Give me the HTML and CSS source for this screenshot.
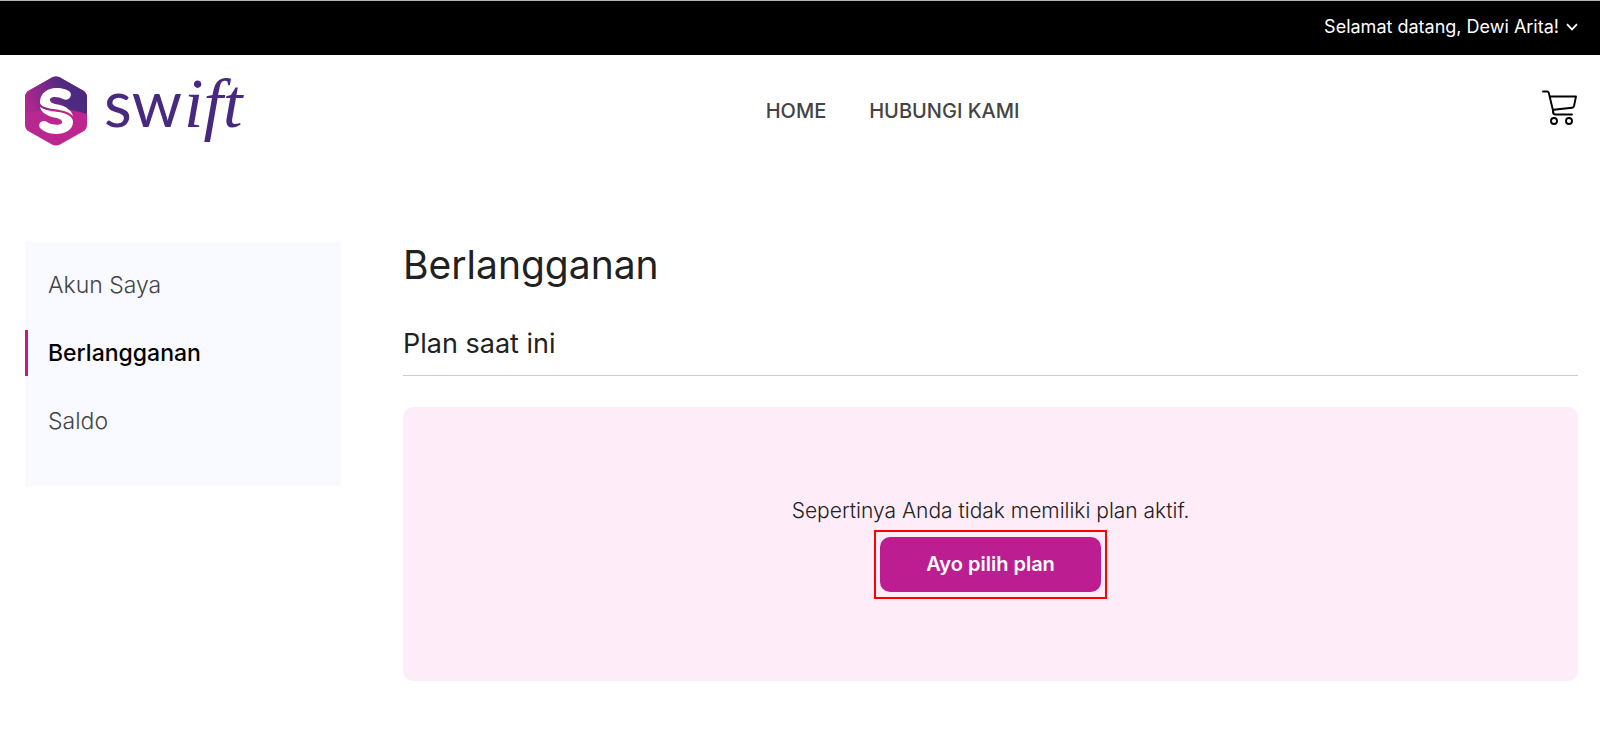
FILE: index.html
```html
<!DOCTYPE html>
<html lang="id">
<head>
<meta charset="utf-8">
<meta name="viewport" content="width=device-width, initial-scale=1">
<title>Berlangganan</title>
<link rel="stylesheet" href="styles.css">
</head>
<body>
<div class="topbar">
  <button class="account" type="button">
    <span>Selamat datang, Dewi Arita!</span>
    <svg class="chevron" viewBox="0 0 12 8" aria-hidden="true"><path d="M1 1.2 6 6.4 11 1.2" fill="none" stroke="currentColor" stroke-width="1.7"/></svg>
  </button>
</div>
<header class="header">
  <a class="brand" href="#" aria-label="swift">
    <svg class="logo" viewBox="0 0 218 70" aria-hidden="true">
      <defs>
        <linearGradient id="upper" x1="0" y1="0.6" x2="1" y2="0.4">
          <stop offset="0" stop-color="#b0288f"/>
          <stop offset="0.65" stop-color="#502a80"/>
          <stop offset="1" stop-color="#472a80"/>
        </linearGradient>
        <linearGradient id="lower" x1="0" y1="0" x2="1" y2="0">
          <stop offset="0" stop-color="#b52990"/>
          <stop offset="1" stop-color="#c0248f"/>
        </linearGradient>
        <clipPath id="hex"><path d="M27 1.500Q31 -.5 35 1.500L58 14.500Q62 17 62 21V49Q62 53 58 55.500L35 68.500Q31 70.500 27 68.500L4 55.500Q0 53 0 49V21Q0 17 4 14.500Z"/></clipPath>
      </defs>
      <g clip-path="url(#hex)">
        <rect width="62" height="70" fill="url(#lower)"/>
        <path d="M0 0H62V38Q46 33 31 33Q15 33 0 38Z" fill="url(#upper)"/>
      </g>
      <path d="M15 26C15 17 23 12 31 12C38 12 43 14 45 16C48 20 43 26 38 23C34 21 27 20 25 23C24 27 30 28 35 29C42 31 47 35 48 40C41 33 30 34 23 32C18 31 15 29 15 26Z" fill="#fff"/>
      <path d="M15 31C22 36 32 35 38 37C45 39 48 42 48 46C48 54 40 58 31 58C24 58 18 55 15 52C12 47 18 43 22 46C26 49 35 50 37 47C38 43 32 42 27 41C21 39 16 36 15 31Z" fill="#fff"/>
      <text class="logo-sans" x="79" y="51">sw</text>
      <text class="logo-serif" x="159" y="51">ift</text>
    </svg>
  </a>
  <nav class="nav" aria-label="Utama">
    <a href="#">HOME</a>
    <a href="#">HUBUNGI KAMI</a>
  </nav>
  <a class="cart" href="#" aria-label="Keranjang">
    <svg viewBox="0 0 36 36" aria-hidden="true"><g fill="none" stroke="#000" stroke-width="1.900" stroke-linecap="round" stroke-linejoin="round"><path d="M1 1.500H5Q6.300 1.500 6.700 2.500L11.500 22.500M8 6.500H34L32 16Q31.700 17.500 30 17.700L11.500 19.800M11 19.500V22Q11 24.500 13.500 24.500H30"/><circle cx="12" cy="31" r="3"/><circle cx="27" cy="31" r="3"/></g></svg>
  </a>
</header>
<div class="layout">
  <aside class="sidebar">
    <nav aria-label="Akun">
      <ul class="menu">
        <li><a class="menu-link" href="#">Akun Saya</a></li>
        <li><a class="menu-link menu-link-active" href="#" aria-current="page">Berlangganan</a></li>
        <li><a class="menu-link" href="#">Saldo</a></li>
      </ul>
    </nav>
  </aside>
  <main class="main">
    <h1 class="title">Berlangganan</h1>
    <h2 class="subtitle">Plan saat ini</h2>
    <section class="panel">
      <p class="message">Sepertinya Anda tidak memiliki plan aktif.</p>
      <div class="highlight"><button class="cta" type="button">Ayo pilih plan</button></div>
    </section>
  </main>
</div>
</body>
</html>
```
FILE: styles.css
```css
* { box-sizing: border-box; }
body {
  margin: 0;
  background: #fff;
  color: #212121;
  font-family: Inter, "Liberation Sans", sans-serif;
}
a { color: inherit; text-decoration: none; }
button { border: 0; font-family: inherit; cursor: pointer; }
.topbar {
  display: flex;
  justify-content: flex-end;
  height: 55px;
  padding: 0 22px 3px;
  border-top: 1px solid #b4b4b4;
  background: #000;
}
.account {
  display: flex;
  align-items: center;
  gap: 7px;
  padding: 0;
  background: none;
  color: #fff;
  font-size: 18px;
}
.chevron { width: 12px; height: 8px; }
.header {
  display: flex;
  align-items: center;
  justify-content: space-between;
  padding: 21px 22px 0 25px;
}
.brand, .cart { display: flex; }
.cart { padding-bottom: 6px; }
.logo { width: 218px; height: 70px; overflow: visible; }
.logo-sans, .logo-serif { fill: #472a80; }
.logo-sans { font: 400 64px Lato, sans-serif; }
.logo-serif { font: italic 400 70px "Liberation Serif", serif; }
.nav {
  display: flex;
  gap: 43px;
  color: #444;
  font-size: 20px;
  font-weight: 500;
}
.cart svg { width: 36px; height: 36px; }
.layout {
  display: grid;
  grid-template-columns: 316px 1fr;
  align-items: start;
  gap: 62px;
  padding: 96px 22px 48px 25px;
}
.sidebar {
  padding: 20px 0 42px;
  background: #f8faff;
}
.menu {
  display: grid;
  gap: 22px;
  margin: 0;
  padding: 0;
  list-style: none;
}
.menu-link {
  display: block;
  padding-left: 20px;
  border-left: 3px solid transparent;
  color: #444;
  font-size: 23px;
  font-weight: 300;
  line-height: 46px;
}
.menu-link-active {
  border-color: #c9138f;
  color: #000;
  font-weight: 500;
}
.title {
  margin: 0;
  font-size: 39px;
  font-weight: 400;
  line-height: 46px;
}
.subtitle {
  margin: 36px 0 31px;
  padding-bottom: 11px;
  border-bottom: 1px solid #ccc;
  font-size: 27px;
  font-weight: 400;
  line-height: 40px;
}
.panel {
  display: flex;
  flex-direction: column;
  align-items: center;
  padding: 90px 24px 82px;
  border-radius: 10px;
  background: #feecf8;
}
.message {
  margin: 0 0 5px;
  font-size: 21px;
  font-weight: 300;
  line-height: 28px;
}
.highlight {
  padding: 5px 4px;
  border: 2px solid #f00;
}
.cta {
  display: block;
  padding: 0 46px;
  border-radius: 10px;
  background: #bc1e92;
  color: #fff;
  font-size: 20px;
  font-weight: 600;
  line-height: 55px;
}
```
